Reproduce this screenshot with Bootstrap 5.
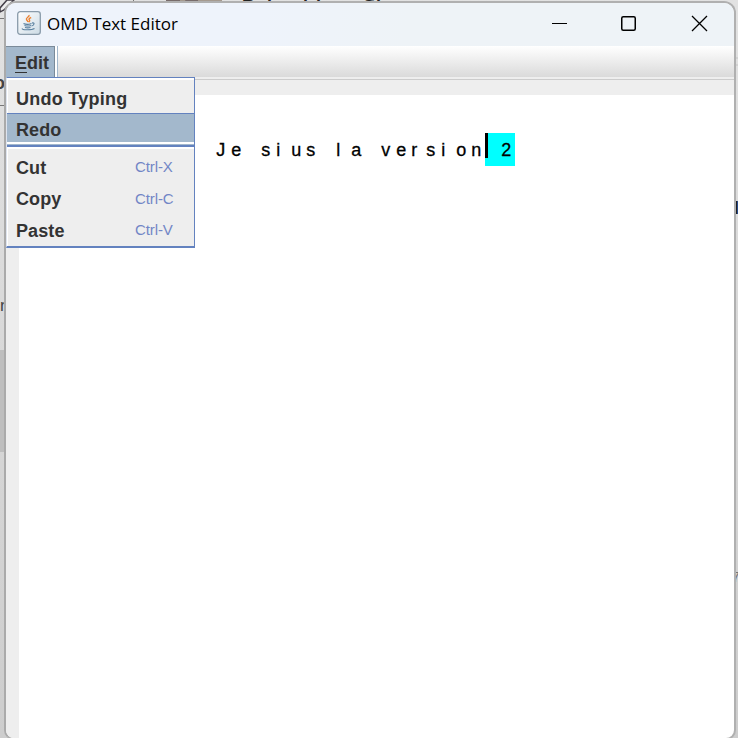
<!DOCTYPE html>
<html lang="en">
<head>
<meta charset="utf-8">
<title>OMD Text Editor</title>
<link href="https://cdn.jsdelivr.net/npm/bootstrap@5.3.0/dist/css/bootstrap.min.css" rel="stylesheet">
<style>
html,body{height:738px;overflow:hidden}
body{background:linear-gradient(#e2e2e2,#d9d9d9 45%,#cdcdcd);font-family:"Liberation Sans",Arial,sans-serif;color:#000}
.win{margin:1px 0 0 4px;width:732px;height:739px;border:2px solid #b0b0b0;border-left-color:#aaa;border-radius:12px 12px 10px 10px;background:#fff;overflow:hidden;flex:none}
.titlebar{height:43px;background:linear-gradient(100deg,#eef3fb 35%,#eef3f7 55%);padding:0 0 3px 11px}
.caption{font:17px/24px "Open Sans","Noto Sans",sans-serif;margin:1px 0 0 6px;white-space:nowrap}
.menustrip{height:31px;background:linear-gradient(#fff,#dadada)}
.edit{width:49px;background:#a3b8cc;border:1px solid #7a8a99;border-left:0;border-bottom:0;padding-left:9px;font:bold 18px/33px "Liberation Sans",Arial,sans-serif;color:#333}
.edit span{border-bottom:1px solid #333;display:inline-block;line-height:17px}
.editgap{width:3px;background:#fff;border-right:1px solid #a3b8cc}
.toolgap{height:18px;background:linear-gradient(#eee 2px,#ccc 2px,#ccc 3px,#eee 3px)}
.gutter{width:13px;background:#eee}
.docline{padding:38px 0 0 196px;font-size:18px;line-height:35px;height:71px}
.docline i{font-style:normal;width:15px;height:33px;padding-left:1.2px;-webkit-text-stroke:.3px #000}
.docline .sel{background:#0ff}
.caret{width:3px;height:25px;background:#000;left:0;top:0}
.popmenu{left:6px;top:77px;width:189px;height:171px;border:1px solid #6382bf;border-left-color:#dde3ee;border-bottom-width:2px;background:#eee;box-shadow:inset 1px 2px #fff;font-weight:bold;font-size:18px;color:#333}
.entry{padding-left:9px;letter-spacing:.1px}
.entry.first{letter-spacing:.25px}
.entry small{font-size:15px;font-weight:normal;color:#7286c6;width:59px;letter-spacing:-.1px;line-height:35px}
.redo{height:29px;background:#a3b8cc;border-top:1px solid #6382bf;line-height:33px}
.rule{height:7px;background:linear-gradient(#fff 2px,#a3b8cc 2px,#a3b8cc 3px,#6382bf 3px,#6382bf 5px,#fff 5px)}
</style>
<script src="https://cdn.jsdelivr.net/npm/bootstrap@5.3.0/dist/js/bootstrap.bundle.min.js"></script>
</head>
<body>
<svg class="position-absolute top-0 start-0" width="738" height="738" aria-hidden="true">
<path d="M0 8L7 0h7L4 10l-4 2z" fill="#eee" stroke="#443f48" stroke-width="1.5"/>
<path d="M71 2.500h20" stroke="#444" stroke-width="2"/>
<path d="M133.500 0v3M0 18.500h5M0 105.500h5" stroke="#777"/>
<path d="M166 0h56v4h-56z" fill="#a59a8f"/><path d="M166 0h14v4h-14zM185 0h13v4h-11z" fill="#786c6b"/>
<path d="M0 350h5v102H0z" fill="#bebebe"/>
<path d="M735 58h3M735 65h3" stroke="#c4c4c4"/>
<text x="242 255 267 273 283 293 303 309 316 321 331 341 352 363 370" y="13" font-size="18" font-weight="bold" fill="#222">Rolanelole n Sti</text>
<text x="-6" y="89" font-size="18" font-weight="bold" fill="#444">o</text>
<text x="0" y="311" font-size="17" fill="#444">r</text>
<text x="728" y="214" font-size="18" font-weight="bold" fill="#222">d</text>
<text x="732" y="582" font-size="14" fill="#777">7</text>
</svg>
<main class="win d-flex flex-column position-relative">
<header class="titlebar d-flex align-items-center flex-shrink-0">
<svg width="24" height="24" viewBox="0 0 24 24"><defs><linearGradient id="g" x2="1" y2="1"><stop stop-color="#fff"/><stop offset="1" stop-color="#ccdbe5"/></linearGradient></defs><rect x=".7" y=".7" width="22.600" height="22.600" rx="2.500" fill="url(#g)" stroke="#899baa" stroke-width="1.300"/><path d="M12 4c1 2-3.600 2.600-2.500 4.600.5 1 1.600 1.400 1.300 2.600M14.200 6.500c-2.800 1-2.500 2-1.600 2.800.5.700-.4 1.300-.8 1.800" fill="none" stroke="#ee812f" stroke-width="1.400"/><path d="M6.500 12.500c2 1 6 .8 8 0M7.500 14.500c2 .7 4.500.7 6.500 0M8 16.500c2 .6 3.500.6 5.500 0M15 12c3-.7 2.500 2.400-.5 3M5.500 17.500c-2 1.500 9 2 12 0" fill="none" stroke="#587f9e" stroke-width="1.100"/></svg>
<span class="caption">OMD Text Editor</span>
<svg class="ms-auto me-4" width="160" height="18" viewBox="0 0 160 18" fill="none" stroke="#000"><path d="M2 9.500h15"/><rect x="71.750" y="2.750" width="13.500" height="13.500" rx="1.500" stroke-width="1.500"/><path d="M142 2l15 15M157 2l-15 15" stroke-width="1.300"/></svg>
</header>
<nav class="menustrip d-flex flex-shrink-0"><div class="edit"><span>E</span>dit</div><div class="editgap"></div></nav>
<div class="toolgap flex-shrink-0"></div>
<section class="d-flex flex-grow-1"><div class="gutter"></div>
<div class="docline d-flex" id="line"></div></section>
</main>
<div class="popmenu position-absolute d-flex flex-column">
<div class="entry first flex-shrink-0" style="height:35px;line-height:42px">Undo Typing</div>
<div class="entry redo flex-shrink-0">Redo</div>
<div class="rule flex-shrink-0"></div>
<div class="entry d-flex justify-content-between" style="height:32px;line-height:38px">Cut<small>Ctrl-X</small></div>
<div class="entry d-flex justify-content-between" style="height:31px;line-height:37px">Copy<small>Ctrl-C</small></div>
<div class="entry d-flex justify-content-between" style="height:31px;line-height:38px">Paste<small>Ctrl-V</small></div>
</div>
<script>
const line = document.getElementById('line');
[...'Je sius la version 2'].forEach((ch, n) => {
  const cell = document.createElement('i');
  cell.textContent = ch;
  if (n >= 18) cell.className = 'sel';
  if (n === 18) {
    cell.classList.add('position-relative');
    const caret = document.createElement('b');
    caret.className = 'caret position-absolute';
    cell.append(caret);
  }
  line.append(cell);
});
</script>
</body>
</html>
